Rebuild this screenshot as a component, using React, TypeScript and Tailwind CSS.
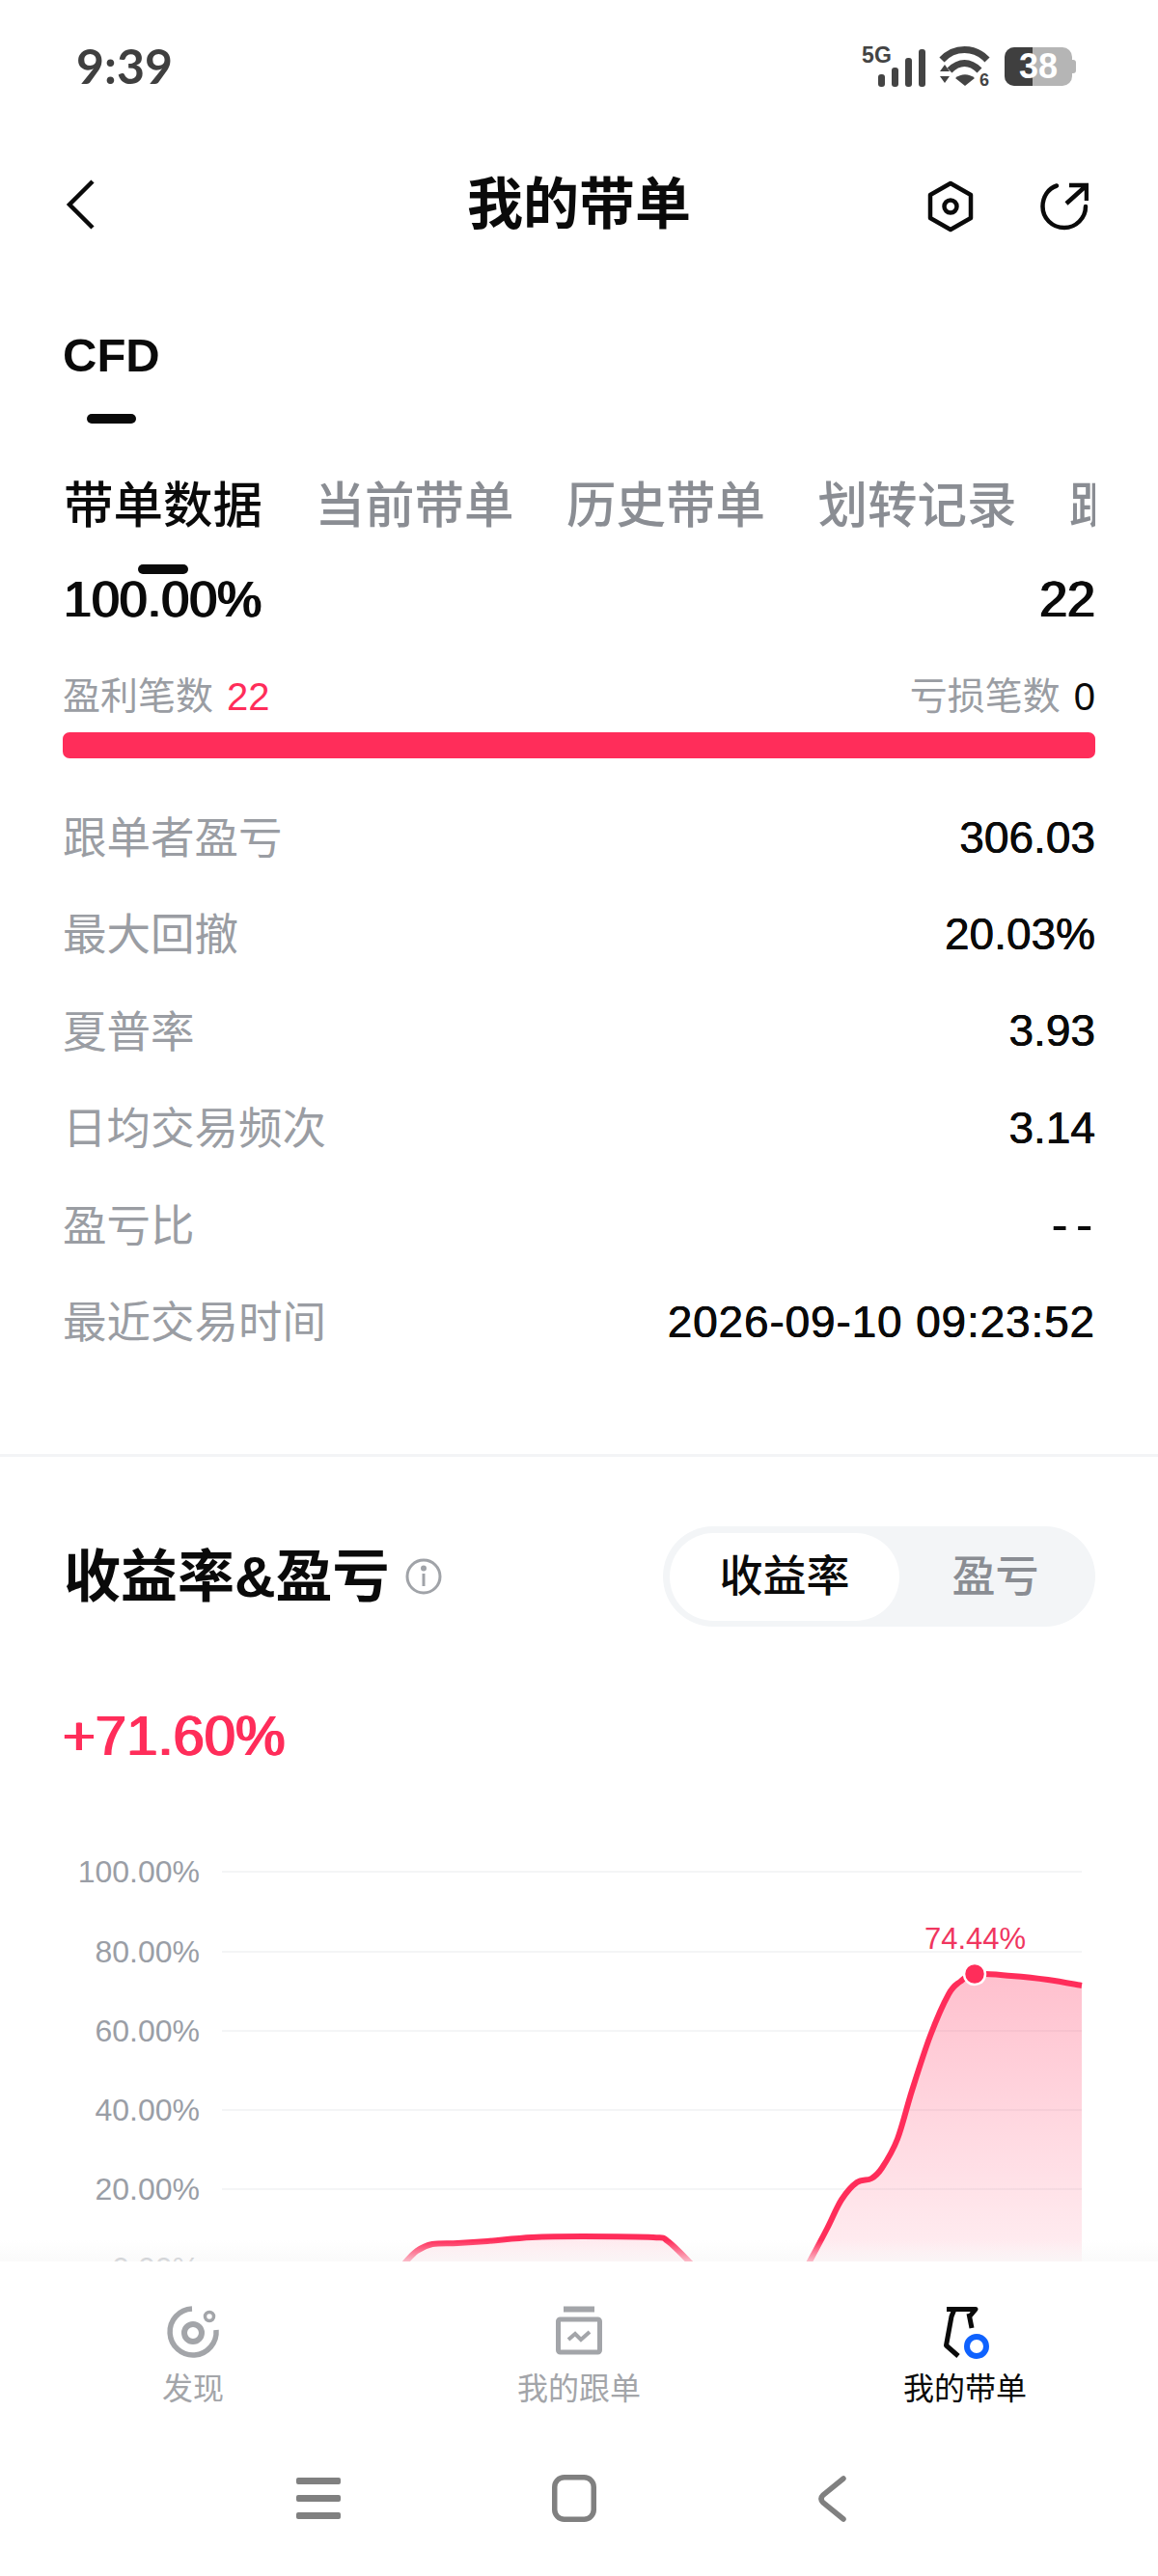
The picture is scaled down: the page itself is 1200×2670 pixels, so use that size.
const FONT = "font-['Liberation_Sans','Noto_Sans_CJK_SC',sans-serif]"
const MEDIUM = '[text-shadow:1px_0_currentColor,-1px_0_currentColor]'
const BOOK = '[text-shadow:0.3px_0_currentColor,-0.3px_0_currentColor]'

const stats = [
  { label: '跟单者盈亏', value: '306.03', spread: '' },
  { label: '最大回撤', value: '20.03%', spread: '' },
  { label: '夏普率', value: '3.93', spread: '' },
  { label: '日均交易频次', value: '3.14', spread: '' },
  { label: '盈亏比', value: '--', spread: 'text-[50px] tracking-[9px] -mr-[6px]' },
  { label: '最近交易时间', value: '2026-09-10 09:23:52', spread: 'tracking-[0.85px]' },
]

const axis = ['100.00%', '80.00%', '60.00%', '40.00%', '20.00%', '0.00%']

type Pt = [number, number]

const left: Pt[] = [
  [419, 2346], [432, 2333], [448, 2326], [474, 2325], [505, 2323], [551, 2319],
  [604, 2318], [677, 2319], [692, 2323], [716, 2346],
]
const right: Pt[] = [
  [838, 2346], [857, 2310], [872, 2280], [888, 2262], [903, 2258], [914, 2247],
  [930, 2217], [945, 2167], [964, 2110], [983, 2067], [995, 2054], [1010, 2046],
  [1048, 2048], [1086, 2052], [1121, 2058],
]

// catmull-rom through the traced points
function smooth(pts: Pt[]) {
  let d = `M${pts[0][0]} ${pts[0][1]}`
  for (let i = 0; i < pts.length - 1; i++) {
    const p0 = pts[Math.max(i - 1, 0)]
    const p1 = pts[i]
    const p2 = pts[i + 1]
    const p3 = pts[Math.min(i + 2, pts.length - 1)]
    const c1x = p1[0] + (p2[0] - p0[0]) / 6
    const c1y = p1[1] + (p2[1] - p0[1]) / 6
    const c2x = p2[0] - (p3[0] - p1[0]) / 6
    const c2y = p2[1] - (p3[1] - p1[1]) / 6
    d += `C${c1x} ${c1y} ${c2x} ${c2y} ${p2[0]} ${p2[1]}`
  }
  return d
}

function area(pts: Pt[]) {
  const last = pts[pts.length - 1]
  return `${smooth(pts)}L${last[0]} 2351L${pts[0][0]} 2351Z`
}

function StatusBar() {
  return (
    <div className="h-[136px] shrink-0 flex items-center justify-between pl-[79px] pr-[85px]">
      <span className="font-['Lato',sans-serif] font-bold text-[50px] leading-none text-[#3f3f3f]">9:39</span>
      <div className="flex items-center gap-[14px] pt-[1px]">
        <svg width="66" height="44" viewBox="0 0 66 44" fill="#444">
          <text x="0" y="18" fontFamily="Liberation Sans" fontWeight="700" fontSize="23" textLength="31">5G</text>
          <rect x="17" y="30" width="7" height="13" rx="3" />
          <rect x="31" y="23" width="7" height="20" rx="3" />
          <rect x="45" y="13" width="7" height="30" rx="3" />
          <rect x="59" y="4" width="7" height="39" rx="3" />
        </svg>
        <svg width="54" height="42" viewBox="0 0 54 42" fill="none">
          <path d="M3 14C16 0 37 0 50 14" stroke="#444" strokeWidth="7" />
          <path d="M11 25C21 15 32 15 42 25" stroke="#444" strokeWidth="7" />
          <path d="M17 33C23 28 31 28 37 33L27 41Z" fill="#444" />
          <path d="M1 26L6 19L11 26ZM1 31L11 31L6 38Z" fill="#444" />
          <text x="42" y="41" fontFamily="Liberation Sans" fontWeight="700" fontSize="18" fill="#444">6</text>
        </svg>
        <div className="flex items-center">
          <div className="relative w-[70px] h-[40px] rounded-[10px] bg-[#b5b5b5] overflow-hidden flex items-center justify-center">
            <div className="absolute left-0 top-0 bottom-0 w-[29px] bg-[#3f3f3f]" />
            <span className={`relative ${FONT} font-bold text-[36px] leading-none text-white`}>38</span>
          </div>
          <div className="w-[4px] h-[14px] rounded-r-[3px] bg-[#b5b5b5]" />
        </div>
      </div>
    </div>
  )
}

function TitleBar() {
  return (
    <div className="relative h-[152px] shrink-0 flex items-center justify-between pl-[68px] pr-[72px]">
      <svg width="30" height="52" viewBox="0 0 30 52" fill="none" stroke="#0a0a0a" strokeWidth="4.5">
        <path d="M28 2L4 26L28 50" />
      </svg>
      <h1 className={`absolute left-0 right-0 text-center ${FONT} font-bold text-[58px] leading-none text-[#0a0a0a]`}>我的带单</h1>
      <div className="flex items-center gap-[69px] pt-[3px]">
        <svg width="48" height="54" viewBox="0 0 48 54" fill="none" stroke="#0a0a0a" strokeWidth="4.5">
          <path d="M24 3L45 15V39L24 51L3 39V15Z" strokeLinejoin="round" />
          <circle cx="24" cy="27" r="6.5" />
        </svg>
        <svg width="50" height="50" viewBox="0 0 50 50" fill="none" stroke="#0a0a0a" strokeWidth="4.5">
          <path d="M17 3.500C8 6.500 2.500 15 2.500 25C2.500 37 12 47 25 47C37 47 47 37 47 25" strokeLinecap="round" />
          <path d="M27 22L47 4M30 3H48V19" />
        </svg>
      </div>
    </div>
  )
}

function Summary() {
  return (
    <div className={`px-[65px] ${FONT}`}>
      <div className="mt-[51px] h-[60px] flex items-center text-[49px] font-bold text-[#0a0a0a]">CFD</div>
      <div className="mt-[30px] ml-[25px] w-[51px] h-[10px] rounded-full bg-[#0a0a0a]" />

      <div className="mt-[54px] h-[60px] pt-[3px] pl-[1px] flex items-center gap-[54.5px] overflow-hidden whitespace-nowrap text-[51.5px] font-medium text-[#8a8d93]">
        <span className="shrink-0 text-[#0a0a0a]">带单数据</span>
        <span className="shrink-0">当前带单</span>
        <span className="shrink-0">历史带单</span>
        <span className="shrink-0">划转记录</span>
        <span className="shrink-0">跟单者</span>
      </div>
      <div className="mt-[32px] ml-[78px] w-[52px] h-[10px] rounded-full bg-[#0a0a0a]" />

      <div className={`h-[52px] flex items-center justify-between text-[52px] leading-none text-[#0a0a0a] ${MEDIUM}`}>
        <span className="pl-[1px]">100.00%</span>
        <span>22</span>
      </div>

      <div className="mt-[55px] h-[40px] flex items-center justify-between text-[39px] text-[#9a9da3]">
        <span className="flex items-center gap-[14px]">盈利笔数 <span className="text-[40px] text-[#ff2d5a]">22</span></span>
        <span className="flex items-center gap-[14px]">亏损笔数 <span className="text-[40px] text-[#0a0a0a]">0</span></span>
      </div>
      <div className="mt-[17px] h-[27px] rounded-[7px] bg-[#ff2d5a]" />

      <div className="mt-[32px]">
        {stats.map((row) => (
          <div key={row.label} className="h-[100.4px] flex items-center justify-between">
            <span className="pt-[4px] text-[45.5px] text-[#9a9da3]">{row.label}</span>
            <span className={`text-[46px] text-[#0a0a0a] ${BOOK} ${row.spread}`}>{row.value}</span>
          </div>
        ))}
      </div>
    </div>
  )
}

function ChartHead() {
  return (
    <div className={`px-[65px] ${FONT}`}>
      <div className="mt-[72px] h-[104px] flex items-center justify-between">
        <div className="flex items-center gap-[16px] pl-[1px]">
          <h2 className="pt-[2px] text-[59px] font-bold leading-none text-[#0a0a0a]">收益率&amp;盈亏</h2>
          <svg width="38" height="38" viewBox="0 0 38 38" fill="none" stroke="#a0a3a8" strokeWidth="3">
            <circle cx="19" cy="19" r="17" />
            <path d="M19 16V29" />
            <circle cx="19" cy="10.500" r="1.500" fill="#a0a3a8" />
          </svg>
        </div>
        <div className="w-[448px] h-[104px] rounded-full bg-[#f3f5f7] flex items-center pl-[7px]">
          <div className="w-[238px] h-[91px] rounded-full bg-white flex items-center justify-center text-[45px] font-medium text-[#0a0a0a]">收益率</div>
          <div className="flex-1 pr-[4px] text-center text-[45px] font-medium text-[#8a8d93]">盈亏</div>
        </div>
      </div>
      <div className={`mt-[77px] h-[70px] flex items-center text-[58px] text-[#ff2d5a] ${MEDIUM}`}>+71.60%</div>
    </div>
  )
}

function Chart() {
  return (
    <div className={`relative mt-[66px] ${FONT}`}>
      {axis.map((tick) => (
        <div key={tick} className="h-[82.2px] flex items-center">
          <span className="w-[207px] text-right text-[32px] text-[#9a9ea6]">{tick}</span>
          <div className="ml-[23px] w-[891px] h-[2px] bg-[#f4f5f6]" />
        </div>
      ))}
      <svg className="absolute left-0 top-0" width="1200" height="500" viewBox="0 1899 1200 500" fill="none">
        <defs>
          <linearGradient id="fill" gradientUnits="userSpaceOnUse" x1="0" y1="2046" x2="0" y2="2360">
            <stop offset="0" stopColor="#ff2d5a" stopOpacity="0.3" />
            <stop offset="1" stopColor="#ff2d5a" stopOpacity="0.07" />
          </linearGradient>
        </defs>
        <path d={area(left)} fill="url(#fill)" />
        <path d={area(right)} fill="url(#fill)" />
        <path d={smooth(left)} stroke="#ff2d5a" strokeWidth="6" />
        <path d={smooth(right)} stroke="#ff2d5a" strokeWidth="6" />
        <circle cx="1010" cy="2046" r="11" fill="#ff2d5a" stroke="#fff" strokeWidth="2.500" />
      </svg>
      <span className="absolute left-[958px] top-[93px] text-[31px] leading-[36px] text-[#f0365f]">74.44%</span>
    </div>
  )
}

function TabBar() {
  return (
    <div className={`relative h-[162px] shrink-0 grid grid-cols-3 bg-white pt-[45px] ${FONT}`}>
      <div className="absolute left-0 right-0 -top-[22px] h-[22px] bg-gradient-to-b from-transparent to-[#f8f8f8]/70" />
      <div className="flex flex-col items-center">
        <svg width="56" height="56" viewBox="0 0 56 56" fill="none" stroke="#a3a5a9">
          <path d="M27 4A24 24 0 1 0 52 26" strokeWidth="5.500" />
          <circle cx="28" cy="29" r="9" strokeWidth="6" />
          <circle cx="45" cy="12" r="4.500" strokeWidth="3.500" />
        </svg>
        <span className="mt-[13px] text-[32px] leading-[36px] text-[#a3a5a9]">发现</span>
      </div>
      <div className="flex flex-col items-center">
        <svg width="50" height="54" viewBox="0 0 50 54" fill="none" stroke="#a3a5a9">
          <path d="M9 4.500H41" strokeWidth="6" />
          <rect x="3.500" y="15" width="43" height="34" rx="2" strokeWidth="5" />
          <path d="M14 36L21 30L27 36L36 28" strokeWidth="4" />
        </svg>
        <span className="mt-[15px] text-[32px] leading-[36px] text-[#a3a5a9]">我的跟单</span>
      </div>
      <div className="flex flex-col items-center">
        <svg width="58" height="56" viewBox="976 2388 58 56" fill="none" className="relative left-[5px]">
          <path d="M981 2392.500H1011L1004 2401M989 2392.500L986 2400L980.500 2430L993 2441M1004 2397L1007 2412" stroke="#0a0a0a" strokeWidth="5" strokeLinejoin="round" />
          <circle cx="1012" cy="2431" r="10" stroke="#0f62fe" strokeWidth="6" />
        </svg>
        <span className="mt-[13px] text-[32px] leading-[36px] text-[#0a0a0a]">我的带单</span>
      </div>
    </div>
  )
}

function NavBar() {
  return (
    <div className="flex-1 flex items-start pt-[62px] pl-[307px]">
      <svg width="46" height="44" viewBox="0 0 46 44" fill="#808080">
        <rect y="0" width="46" height="7" rx="2" />
        <rect y="18" width="46" height="7" rx="2" />
        <rect y="36" width="46" height="7" rx="2" />
      </svg>
      <svg className="ml-[219px] -mt-[3px]" width="46" height="49" viewBox="0 0 46 49" fill="none" stroke="#808080" strokeWidth="5.500">
        <rect x="2.750" y="2.750" width="40.500" height="43.500" rx="10" />
      </svg>
      <svg className="ml-[229px] -mt-[2px]" width="30" height="48" viewBox="0 0 30 48" fill="none" stroke="#808080" strokeWidth="5.500" strokeLinecap="round">
        <path d="M27 3L6 20Q2 24 6 28L27 45" />
      </svg>
    </div>
  )
}

export default function App() {
  return (
    <div className="w-[1200px] h-[2670px] flex flex-col bg-white overflow-hidden">
      <div className="h-[2344px] shrink-0 flex flex-col overflow-hidden">
        <StatusBar />
        <TitleBar />
        <Summary />
        <div className="mt-[87px] h-[3px] shrink-0 bg-[#f3f4f6]" />
        <ChartHead />
        <Chart />
      </div>
      <TabBar />
      <NavBar />
    </div>
  )
}
